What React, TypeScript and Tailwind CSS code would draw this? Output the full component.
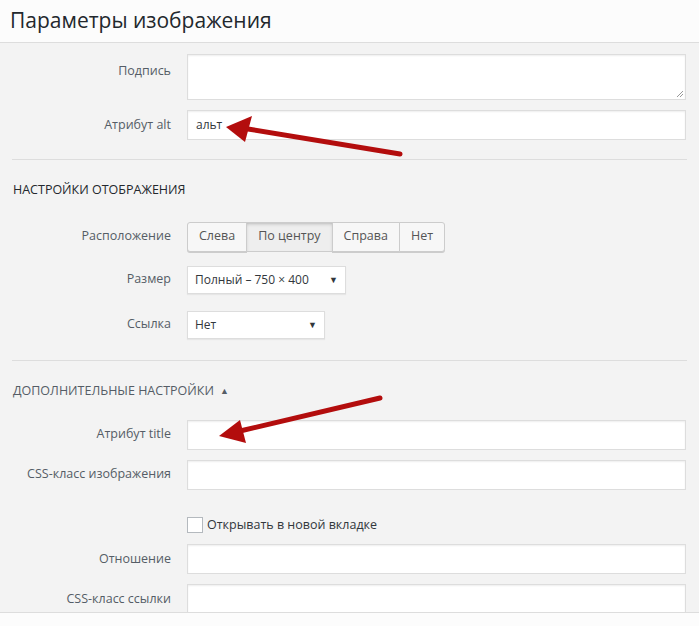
import React from "react";

const Label = ({ children }: { children: React.ReactNode }) => (
  <div className="w-[179px] pr-[8px] text-right text-[12.5px] text-[#555d66]">{children}</div>
);

const Input = ({ value = "" }: { value?: string }) => (
  <div className="ml-[8px] h-[30px] w-[499px] bg-white border border-[#ddd] shadow-[inset_0_1px_2px_rgba(0,0,0,0.07)] flex items-center px-[8px] text-[12px] text-[#32373c]">{value}</div>
);

export default function App() {
  return (
    <div className="relative w-[699px] h-[626px] bg-[#f3f3f3] overflow-hidden" style={{ fontFamily: '"Open Sans", "Noto Sans", sans-serif' }}>
      <div className="h-[43px] bg-[#fcfcfc] border-b border-[#ddd] flex items-center pl-[10px]">
        <div className="text-[21px] text-[#23282d]">Параметры изображения</div>
      </div>
      <div className="pt-[11px]">
        <div className="flex items-start">
          <div className="pt-[8px]"><Label>Подпись</Label></div>
          <div className="ml-[8px] h-[46px] w-[499px] bg-white border border-[#ddd] shadow-[inset_0_1px_2px_rgba(0,0,0,0.07)] relative">
            <svg className="absolute right-[1px] bottom-[1px]" width="8" height="8" viewBox="0 0 8 8"><path d="M7 1L1 7M7 4L4 7" stroke="#999" strokeWidth="1"/></svg>
          </div>
        </div>
        <div className="flex items-center mt-[10px]"><Label>Атрибут alt</Label><Input value="альт" /></div>
        <div className="mx-[12px] mt-[19px] border-t border-[#ddd]" />
        <div className="pl-[13px] mt-[21px] text-[12.5px] text-[#23282d]">НАСТРОЙКИ ОТОБРАЖЕНИЯ</div>
        <div className="flex items-center mt-[22px]">
          <Label>Расположение</Label>
          <div className="ml-[8px] flex h-[30px] text-[12.5px] text-[#555]">
            {["Слева", "По центру", "Справа", "Нет"].map((t, i) => (
              <div key={t} className={`px-[11px] flex items-center border border-[#ccc] ${i > 0 ? "-ml-px" : "rounded-l-[3px]"} ${i === 3 ? "rounded-r-[3px]" : ""} ${i === 1 ? "bg-[#eee] border-[#999] shadow-[inset_0_2px_5px_-3px_rgba(0,0,0,0.5)] z-10" : "bg-[#f7f7f7] shadow-[0_1px_0_#ccc]"}`}>{t}</div>
            ))}
          </div>
        </div>
        <div className="flex items-center mt-[14px]">
          <Label>Размер</Label>
          <div className="ml-[8px] h-[28px] w-[159px] bg-white border border-[#ddd] shadow-[0_1px_1px_rgba(0,0,0,0.05)] flex items-center justify-between px-[7px] text-[12px] text-[#32373c]">
            <span>Полный – 750 × 400</span><span className="text-[9px]">▼</span>
          </div>
        </div>
        <div className="flex items-center mt-[17px]">
          <Label>Ссылка</Label>
          <div className="ml-[8px] h-[28px] w-[138px] bg-white border border-[#ddd] shadow-[0_1px_1px_rgba(0,0,0,0.05)] flex items-center justify-between px-[7px] text-[12px] text-[#32373c]">
            <span>Нет</span><span className="text-[9px]">▼</span>
          </div>
        </div>
        <div className="mx-[12px] mt-[21px] border-t border-[#ddd]" />
        <div className="pl-[13px] mt-[21px] text-[12.5px] text-[#555d66] flex items-center gap-[6px]">ДОПОЛНИТЕЛЬНЫЕ НАСТРОЙКИ <span className="text-[9px]">▲</span></div>
        <div className="flex items-center mt-[19px]"><Label>Атрибут title</Label><Input /></div>
        <div className="flex items-center mt-[10px]"><Label>CSS-класс изображения</Label><Input /></div>
        <div className="flex items-center mt-[26px] ml-[187px] gap-[4px] text-[12.5px] text-[#32373c]">
          <div className="w-[16px] h-[16px] bg-white border border-[#b4b9be]" />
          <span>Открывать в новой вкладке</span>
        </div>
        <div className="flex items-center mt-[10px]"><Label>Отношение</Label><Input /></div>
        <div className="flex items-center mt-[10px]"><Label>CSS-класс ссылки</Label><Input /></div>
      </div>
      <div className="absolute left-0 right-0 top-[612px] bottom-0 bg-[#fcfcfc] border-t border-[#ddd]" />
      <svg className="absolute inset-0 pointer-events-none" width="699" height="626">
        <path d="M400 154 L248 129" stroke="#b30d0d" strokeWidth="5" strokeLinecap="round" />
        <polygon points="226,127 252,116 245,142" fill="#b30d0d" />
        <path d="M380 398 L240 431" stroke="#b30d0d" strokeWidth="5" strokeLinecap="round" />
        <polygon points="219,436 240,420 246,443" fill="#b30d0d" />
      </svg>
    </div>
  );
}
